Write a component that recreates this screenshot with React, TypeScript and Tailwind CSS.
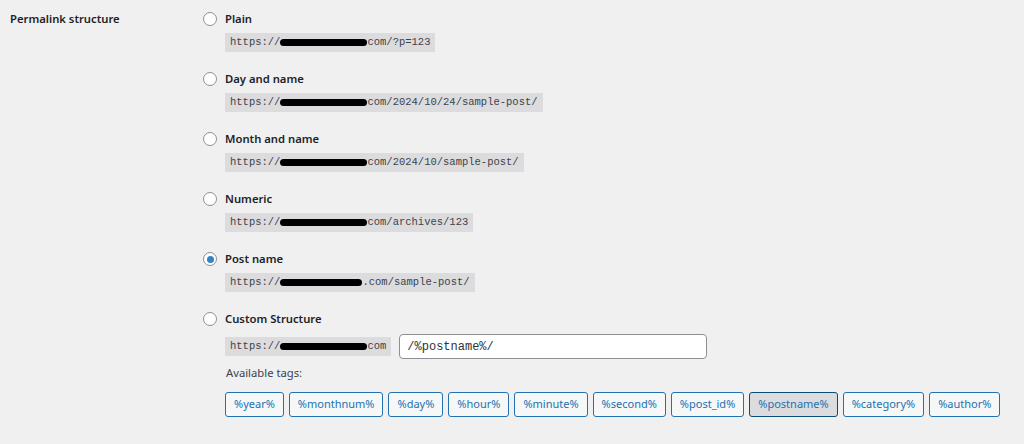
import React from "react";

const options = [
  { label: "Plain", tail: "com/?p=123", blob: 87 },
  { label: "Day and name", tail: "com/2024/10/24/sample-post/", blob: 87 },
  { label: "Month and name", tail: "com/2024/10/sample-post/", blob: 87 },
  { label: "Numeric", tail: "com/archives/123", blob: 87 },
  { label: "Post name", tail: ".com/sample-post/", blob: 82, checked: true },
];

const tags = [
  "%year%",
  "%monthnum%",
  "%day%",
  "%hour%",
  "%minute%",
  "%second%",
  "%post_id%",
  "%postname%",
  "%category%",
  "%author%",
];

function Radio({ checked }: { checked?: boolean }) {
  return (
    <span className="w-[14px] h-[14px] rounded-full border border-[#8c8f94] bg-white flex items-center justify-center shrink-0">
      {checked && <span className="w-[7px] h-[7px] rounded-full bg-[#3582c4]"></span>}
    </span>
  );
}

function Url({ tail, blob }: { tail: string; blob: number }) {
  return (
    <code className="inline-flex items-center h-[19px] px-[5px] bg-[#dcdcde] text-[#3c434a] font-['Liberation_Mono',monospace] text-[10.5px]">
      <span>https://</span>
      <span className="inline-block h-[7px] bg-black rounded-full" style={{ width: blob }}></span>
      <span>{tail}</span>
    </code>
  );
}

export default function App() {
  return (
    <div className="min-h-screen bg-[#f0f0f1] text-[#1d2327] font-['Noto_Sans',sans-serif] text-[11.25px]">
      <div className="flex pl-[10px] pt-[11px]">
        {/* Titulo de la fila */}
        <div className="w-[193px] shrink-0 h-[16px] leading-[16px] font-semibold">Permalink structure</div>
        <div className="flex flex-col">
          {options.map((o) => (
            <div key={o.label} className="flex flex-col mb-[19px]">
              <label className="flex items-center gap-[8px] h-[16px] font-semibold">
                <Radio checked={o.checked} />
                {o.label}
              </label>
              <div className="pl-[22px] mt-[6px] flex">
                <Url tail={o.tail} blob={o.blob} />
              </div>
            </div>
          ))}
          {/* Estructura personalizada */}
          <div className="flex flex-col">
            <label className="flex items-center gap-[8px] h-[16px] font-semibold">
              <Radio />
              Custom Structure
            </label>
            <div className="pl-[22px] mt-[7px] flex items-center gap-[8px]">
              <Url tail="com" blob={87} />
              <input
                defaultValue="/%postname%/"
                className="w-[308px] h-[25px] rounded-[4px] border border-[#8c8f94] bg-white px-[7px] font-['Liberation_Mono',monospace] text-[12px] text-[#2c3338] outline-none"
              />
            </div>
            <div className="pl-[23px] mt-[6px] h-[16px] leading-[16px] text-[#3c434a]">Available tags:</div>
            <div className="pl-[22px] mt-[11px] flex gap-[5px]">
              {tags.map((t) => (
                <button
                  key={t}
                  className={
                    t === "%postname%"
                      ? "h-[25px] px-[8px] rounded-[3px] border border-[#0a4b78] bg-[#dcdcde] text-[#2271b1] text-[11px]"
                      : "h-[25px] px-[8px] rounded-[3px] border border-[#2271b1] bg-[#f6f7f7] text-[#2271b1] text-[11px]"
                  }
                >
                  {t}
                </button>
              ))}
            </div>
          </div>
        </div>
      </div>
    </div>
  );
}
